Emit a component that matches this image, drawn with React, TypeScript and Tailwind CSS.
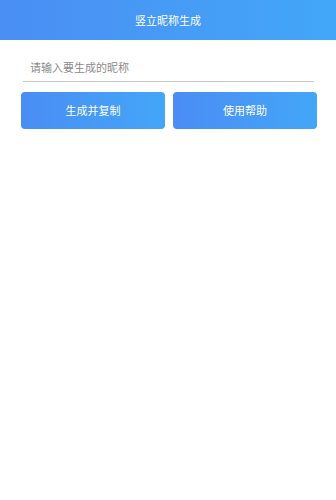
export default function App() {
  return (
    <div
      className="min-h-[500px] bg-white"
      style={{ fontFamily: '"Noto Sans CJK SC", "Liberation Sans", sans-serif' }}
    >
      {/* header */}
      <div className="h-[40px] flex items-center justify-center bg-gradient-to-r from-[#4a8ef3] to-[#42a7f8] text-white text-[11px]">
        竖立昵称生成
      </div>

      {/* input */}
      <div className="pl-[23px] pr-[22px] pt-[13px]">
        <input
          placeholder="请输入要生成的昵称"
          className="w-full h-[28px] px-[7px] text-[11px] text-gray-700 placeholder:text-[#8a8a8a] border-b border-[#c8c8c8] outline-none bg-transparent"
        />
      </div>

      {/* buttons */}
      <div className="flex gap-[8px] pl-[21px] pr-[19px] pt-[10px]">
        <button className="flex-1 h-[37px] rounded-[4px] bg-gradient-to-r from-[#4a8df5] to-[#43a6f7] text-white text-[11px]">
          生成并复制
        </button>
        <button className="flex-1 h-[37px] rounded-[4px] bg-gradient-to-r from-[#4a8df5] to-[#43a6f7] text-white text-[11px]">
          使用帮助
        </button>
      </div>
    </div>
  )
}
